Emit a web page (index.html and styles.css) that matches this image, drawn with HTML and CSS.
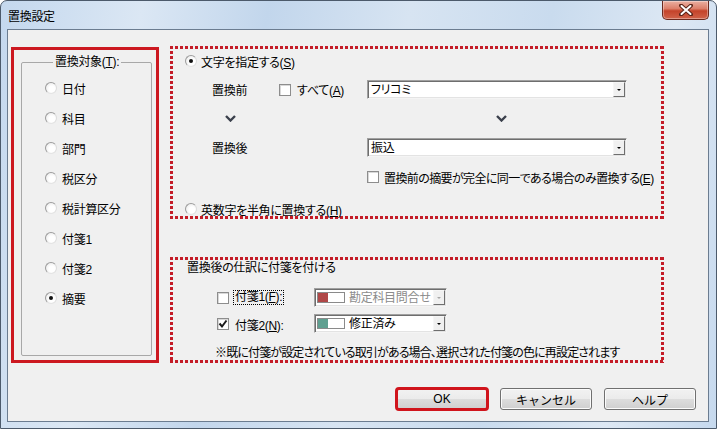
FILE: index.html
```html
<!DOCTYPE html>
<html lang="ja">
<head>
<meta charset="UTF-8">
<title>置換設定</title>
<link rel="stylesheet" href="styles.css">
</head>
<body>

<div class="window">
    <div class="titlebar">
        <span class="title">置換設定</span>
        <div class="close-btn">
            <svg width="14" height="12" viewBox="0 0 14 12">
                <path d="M2 1.5 L12 10.5 M12 1.5 L2 10.5" stroke="#5a2418" stroke-width="4" stroke-linecap="round"/>
                <path d="M2.5 2 L11.5 10 M11.5 2 L2.5 10" stroke="#ffffff" stroke-width="2" stroke-linecap="round"/>
            </svg>
        </div>
    </div>

    <div class="client">
        <div class="main">
            <!-- 置換対象 -->
            <div class="target-panel">
                <fieldset class="target-group">
                    <legend>置換対象(<u>T</u>):</legend>
                    <div class="radio-row"><span class="radio"></span>日付</div>
                    <div class="radio-row"><span class="radio"></span>科目</div>
                    <div class="radio-row"><span class="radio"></span>部門</div>
                    <div class="radio-row"><span class="radio"></span>税区分</div>
                    <div class="radio-row"><span class="radio"></span>税計算区分</div>
                    <div class="radio-row"><span class="radio"></span>付箋1</div>
                    <div class="radio-row"><span class="radio"></span>付箋2</div>
                    <div class="radio-row"><span class="radio checked"></span>摘要</div>
                </fieldset>
            </div>

            <div class="right">
                <div class="dot-box replace-box">
                    <div class="opt-row"><span class="radio checked"></span><span>文字を指定する(<u>S</u>)</span></div>

                    <div class="replace-grid">
                        <div class="label">置換前</div>
                        <div class="check-label"><span class="checkbox"></span><span>すべて(<u>A</u>)</span></div>
                        <div class="combo"><span class="combo-text">フリコミ</span><span class="drop"><i></i></span></div>

                        <div class="chev chev-left">
                            <svg width="11" height="7" viewBox="0 0 11 7"><polyline points="1,1 5.5,5.5 10,1" fill="none" stroke="#3b404c" stroke-width="2.4"/></svg>
                        </div>
                        <div></div>
                        <div class="chev chev-right">
                            <svg width="11" height="7" viewBox="0 0 11 7"><polyline points="1,1 5.5,5.5 10,1" fill="none" stroke="#3b404c" stroke-width="2.4"/></svg>
                        </div>

                        <div class="label">置換後</div>
                        <div></div>
                        <div class="combo"><span class="combo-text">振込</span><span class="drop"><i></i></span></div>

                        <div></div>
                        <div></div>
                        <div class="check-label exact"><span class="checkbox"></span><span>置換前の摘要が完全に同一である場合のみ置換する(<u>E</u>)</span></div>
                    </div>

                    <div class="opt-row last"><span class="radio"></span><span>英数字を半角に置換する(<u>H</u>)</span></div>
                </div>

                <div class="dot-box tag-box">
                    <div class="tag-title">置換後の仕訳に付箋を付ける</div>
                    <div class="tag-grid">
                        <div class="check-label"><span class="checkbox"></span><span class="focus">付箋1(<u>F</u>):</span></div>
                        <div class="combo disabled">
                            <span class="swatch red"></span><span class="combo-text">勘定科目問合せ</span><span class="drop"><i></i></span>
                        </div>
                        <div class="check-label"><span class="checkbox checked">
                            <svg width="10" height="10" viewBox="0 0 10 10"><polyline points="1.5,4.5 4,7.5 8.5,1.5" fill="none" stroke="#1b1b1b" stroke-width="2"/></svg>
                        </span><span class="plain">付箋2(<u>N</u>):</span></div>
                        <div class="combo">
                            <span class="swatch teal"></span><span class="combo-text">修正済み</span><span class="drop"><i></i></span>
                        </div>
                    </div>
                    <div class="note">※既に付箋が設定されている取引がある場合、選択された付箋の色に再設定されます</div>
                </div>
            </div>
        </div>

        <div class="buttons">
            <button class="btn btn-ok">OK</button>
            <button class="btn">キャンセル</button>
            <button class="btn">ヘルプ</button>
        </div>
    </div>
</div>

</body>
</html>
```

FILE: styles.css
```css
* {
    box-sizing: border-box;
}
body {
    margin: 0;
    width: 717px;
    height: 429px;
    overflow: hidden;
    background: #ffffff;
    font-family: "Liberation Sans", "Noto Sans CJK JP", sans-serif;
    font-size: 12px;
    font-feature-settings: "palt";
    letter-spacing: -0.3px;
    color: #000;
}
u {
    text-decoration: underline;
    text-underline-offset: 1px;
}
.window {
    width: 717px;
    height: 429px;
    display: flex;
    flex-direction: column;
    padding: 0 7px 6px 6px;
    border: 1px solid #4c5a6b;
    border-radius: 7px 7px 0 0;
    background: linear-gradient(100deg, #c4d8ee 0%, #dbe7f4 18%, #c2d6ec 34%, #d7e4f2 52%, #c9dbee 70%, #dde8f4 86%, #c6d9ee 100%);
}
.titlebar {
    height: 28px;
    display: flex;
}
.title {
    align-self: center;
    padding-left: 1px;
    font-size: 12px;
    color: #000;
}
.close-btn {
    margin-left: auto;
    width: 47px;
    height: 19px;
    display: flex;
    align-items: center;
    justify-content: center;
    border: 1px solid #6b2a1f;
    border-top: none;
    border-radius: 0 0 5px 5px;
    background: linear-gradient(#eab0a2 0%, #dc7f6a 42%, #c4432a 55%, #d0634a 100%);
    box-shadow: inset 0 0 0 1px rgba(255, 255, 255, 0.35);
}
.client {
    flex: 1;
    display: flex;
    flex-direction: column;
    padding: 16px 12px 0 3px;
    background: #f0f0f0;
    border: 1px solid #6b7c90;
}
.main {
    display: flex;
    align-items: flex-start;
    gap: 11px;
}
.target-panel {
    width: 148px;
    height: 316px;
    margin-top: 1px;
    display: flex;
    padding: 5px 4px 4px 7px;
    border: 3px solid #cc1820;
}
.target-group {
    flex: 1;
    min-width: 0;
    margin: 0;
    padding: 4px 0 0 23px;
    border: 1px solid #a8a8a8;
    border-radius: 2px;
}
.target-group legend {
    margin-left: 8px;
    padding: 0 2px;
    line-height: 14px;
}
.radio-row {
    height: 30px;
    display: flex;
    align-items: center;
    gap: 5px;
}
.radio {
    width: 12px;
    height: 12px;
    flex: none;
    display: flex;
    align-items: center;
    justify-content: center;
    border-radius: 50%;
    border: 1px solid;
    border-color: #9c9c9c #dcdcdc #e4e4e4 #9c9c9c;
    background: radial-gradient(circle at 60% 60%, #ffffff 35%, #e4e4e4 100%);
}
.radio.checked::after {
    content: "";
    width: 4px;
    height: 4px;
    border-radius: 50%;
    background: #111;
}
.checkbox {
    width: 12px;
    height: 12px;
    flex: none;
    display: flex;
    align-items: center;
    justify-content: center;
    border: 1px solid #8d8d8d;
    background: #fff;
    box-shadow: inset 1px 1px 0 #d8d8d8;
}
.right {
    width: 494px;
    display: flex;
    flex-direction: column;
    gap: 38px;
}
/* square-dotted red frame */
.dot-box {
    border: 3px solid transparent;
    background:
        repeating-linear-gradient(to right, #c41c27 0 3px, transparent 3px 5px) top left / 100% 3px no-repeat,
        repeating-linear-gradient(to right, #c41c27 0 3px, transparent 3px 5px) bottom left / 100% 3px no-repeat,
        repeating-linear-gradient(to bottom, #c41c27 0 3px, transparent 3px 5px) top left / 3px 100% no-repeat,
        repeating-linear-gradient(to bottom, #c41c27 0 3px, transparent 3px 5px) top right / 3px 100% no-repeat;
    background-origin: border-box;
}
.replace-box {
    height: 173px;
    padding: 2px 0 0 12px;
}
.opt-row {
    height: 20px;
    display: flex;
    align-items: center;
    gap: 4px;
}
.opt-row.last {
    height: 16px;
    margin-top: 17px;
}
.replace-grid {
    display: grid;
    grid-template-columns: 67px 88px 260px;
    grid-template-rows: 19px 39px 19px 27px;
    margin: 9px 0 0 27px;
}
.label {
    display: flex;
    align-items: center;
}
.check-label {
    display: flex;
    align-items: center;
    gap: 6px;
    white-space: nowrap;
}
.check-label.exact {
    align-self: end;
    height: 14px;
    gap: 5px;
    letter-spacing: -0.6px;
}
.chev {
    display: flex;
    align-items: center;
}
.chev-left {
    padding-left: 13px;
}
.chev-right {
    padding-left: 129px;
}
.combo {
    height: 19px;
    display: flex;
    align-items: center;
    background: #fff;
    border: 1px solid;
    border-color: #a0a0a0 #f4f4f4 #f4f4f4 #a0a0a0;
    box-shadow: inset 1px 1px 0 #6e6e6e, inset -1px -1px 0 #e3e3e3;
}
.combo-text {
    padding-left: 3px;
    line-height: 16px;
    white-space: nowrap;
}
.drop {
    margin-left: auto;
    width: 12px;
    height: 15px;
    margin-right: 1px;
    display: flex;
    align-items: center;
    justify-content: center;
    border: 1px solid;
    border-color: #f6f6f6 #6e6e6e #6e6e6e #f6f6f6;
    background: #f0f0f0;
}
.drop i {
    width: 0;
    height: 0;
    border-left: 2px solid transparent;
    border-right: 2px solid transparent;
    border-top: 2px solid #000;
}
.tag-box {
    height: 106px;
    padding: 1px 0 0 14px;
}
.tag-title {
    line-height: 14px;
}
.tag-grid {
    display: grid;
    grid-template-columns: 97px 133px;
    grid-template-rows: 19px 20px;
    row-gap: 7px;
    margin: 13px 0 0 30px;
}
.tag-grid .check-label {
    gap: 4px;
}
.focus {
    border: 1px dotted #000;
    padding: 0 1px;
    line-height: 13px;
}
.plain {
    padding-left: 2px;
}
.swatch {
    width: 28px;
    height: 11px;
    flex: none;
    margin-left: 2px;
    border: 1px solid #8a8a8a;
}
.swatch.red {
    background: linear-gradient(to right, #b04848 10px, #fff 10px);
}
.swatch.teal {
    background: linear-gradient(to right, #5f9f90 10px, #fff 10px);
}
.swatch + .combo-text {
    padding-left: 4px;
}
.combo.disabled .combo-text {
    color: #8c8c8c;
}
.combo.disabled .drop i {
    border-top-color: #a6a6a6;
}
.note {
    margin: 12px 0 0 28px;
    line-height: 14px;
    white-space: nowrap;
    letter-spacing: -0.85px;
}
.buttons {
    display: flex;
    justify-content: flex-end;
    gap: 12px;
    margin-top: 25px;
}
.btn {
    width: 92px;
    height: 22px;
    padding: 0;
    font-family: inherit;
    font-size: 12px;
    color: #000;
    border: 1px solid #707070;
    border-radius: 3px;
    background: linear-gradient(#f2f2f2 0%, #ebebeb 50%, #dddddd 50%, #cfcfcf 100%);
    box-shadow: inset 0 0 0 1px #fbfbfb;
}
.btn-ok {
    outline: 3px solid #d0141c;
    outline-offset: -2px;
}
```
